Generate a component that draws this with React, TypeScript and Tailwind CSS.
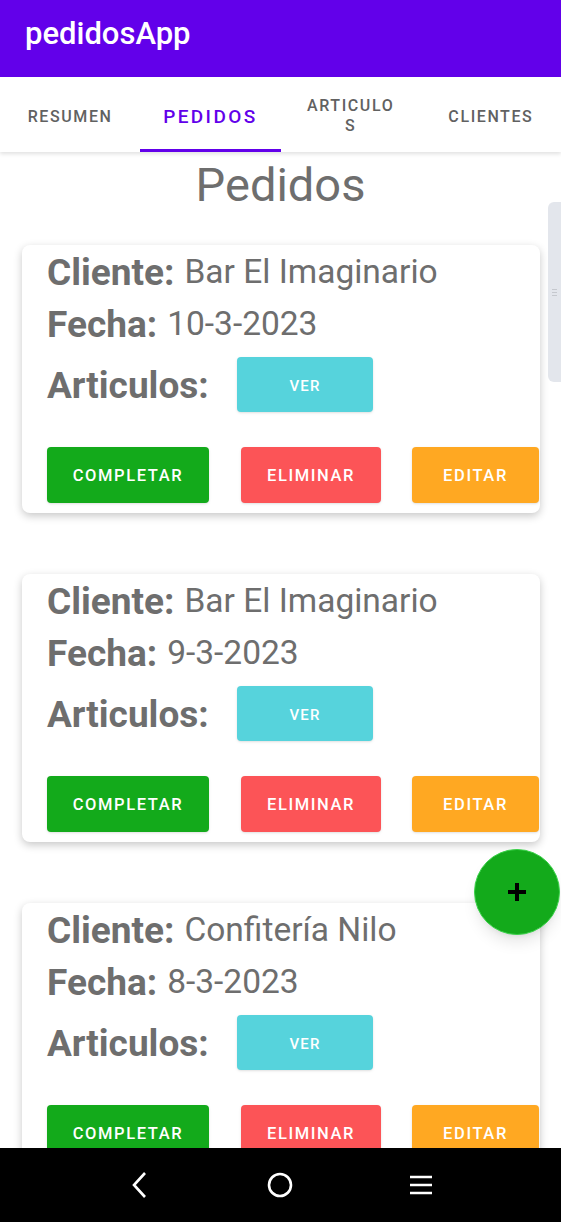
import React from 'react';

interface Pedido {
  cliente: string;
  fecha: string;
}

const pedidos: Pedido[] = [
  { cliente: 'Bar El Imaginario', fecha: '10-3-2023' },
  { cliente: 'Bar El Imaginario', fecha: '9-3-2023' },
  { cliente: 'Confitería Nilo', fecha: '8-3-2023' },
];

function PedidoCard({ pedido }: { pedido: Pedido }) {
  return (
    <div className="ml-[22px] w-[518px] h-[268px] shrink-0 rounded-lg bg-white shadow-[0_3px_8px_rgba(0,0,0,0.22)] pl-[25px] text-[#6e6e6e]">
      <div className="h-[54px] flex items-center leading-none">
        <span className="font-bold text-[37px]">Cliente:</span>
        <span className="ml-[10px] text-[33.5px]">{pedido.cliente}</span>
      </div>
      <div className="h-[50px] flex items-center leading-none">
        <span className="font-bold text-[37px]">Fecha:</span>
        <span className="ml-[10px] text-[33.5px]">{pedido.fecha}</span>
      </div>
      <div className="flex items-center h-[55px] mt-[8px]">
        <span className="text-[37px] font-bold leading-none w-[190px] pt-[2px]">Articulos:</span>
        <button className="w-[136px] h-[55px] pt-[3px] rounded bg-[#56d3dc] text-white text-[15px] font-medium tracking-[1.2px] shadow-sm">
          VER
        </button>
      </div>
      {/* Acciones */}
      <div className="flex mt-[35px] h-[56px]">
        <button className="w-[162px] h-[56px] pt-[3px] rounded bg-[#13aa1b] text-white text-[16.5px] font-medium tracking-[1.6px] shadow-sm">
          COMPLETAR
        </button>
        <button className="ml-[32px] w-[140px] h-[56px] pt-[3px] rounded bg-[#fc5457] text-white text-[16.5px] font-medium tracking-[1.6px] shadow-sm">
          ELIMINAR
        </button>
        <button className="ml-[31px] w-[127px] h-[56px] pt-[3px] rounded bg-[#ffa822] text-white text-[16.5px] font-medium tracking-[1.6px] shadow-sm">
          EDITAR
        </button>
      </div>
    </div>
  );
}

export default function App() {
  return (
    <div className="relative w-[561px] h-[1222px] overflow-hidden flex flex-col bg-white font-['Roboto',sans-serif]">
      {/* Header */}
      <div className="h-[77px] shrink-0 bg-[#6200ea] flex items-center pl-[25px] pb-[8px]">
        <span className="text-white text-[31px] font-medium">pedidosApp</span>
      </div>

      {/* Tabs */}
      <div className="h-[75px] shrink-0 grid grid-cols-4 bg-white shadow-[0_2px_4px_rgba(0,0,0,0.12)] z-10">
        <div className="flex items-center justify-center pt-[5px] text-[16px] font-medium tracking-[1.6px] text-[#616161]">
          RESUMEN
        </div>
        <div className="relative flex items-center justify-center pt-[5px] text-[19px] font-medium tracking-[2.4px] text-[#6200ea]">
          PEDIDOS
          <div className="absolute left-0 right-0 bottom-0 h-[3px] bg-[#6200ea]" />
        </div>
        <div className="flex items-center justify-center text-center pt-[3px] text-[16px] font-medium tracking-[1.6px] leading-[20px] text-[#616161]">
          ARTICULO
          <br />
          S
        </div>
        <div className="flex items-center justify-center pt-[5px] text-[16px] font-medium tracking-[1.6px] text-[#616161]">
          CLIENTES
        </div>
      </div>

      {/* Contenido */}
      <div className="flex-1 overflow-hidden flex flex-col">
        <h1 className="shrink-0 text-center text-[47px] text-[#6e6e6e] leading-none mt-[9px] h-[84px]">Pedidos</h1>
        <div className="shrink-0 flex flex-col gap-[61px]">
          {pedidos.map((p, i) => (
            <PedidoCard key={i} pedido={p} />
          ))}
        </div>
      </div>

      {/* Scroll handle */}
      <div className="absolute right-0 top-[202px] w-[13px] h-[180px] rounded-l-md bg-[#e3e6ec] flex items-center justify-center">
        <div className="w-[5px] flex flex-col gap-[2px]">
          <div className="h-px bg-[#c5c8ce]" />
          <div className="h-px bg-[#c5c8ce]" />
          <div className="h-px bg-[#c5c8ce]" />
        </div>
      </div>

      {/* FAB */}
      <button className="absolute left-[474px] top-[849px] w-[86px] h-[86px] rounded-full bg-[#13aa1b] border border-[#3bd24a] shadow-lg flex items-center justify-center">
        <svg width="22" height="22" viewBox="0 0 22 22">
          <path d="M11 2v18M2 11h18" stroke="#000" strokeWidth="4" />
        </svg>
      </button>

      {/* Navegación del sistema */}
      <div className="h-[74px] shrink-0 bg-black flex items-center justify-around px-[70px]">
        <div className="w-[140px] flex justify-center">
          <svg width="20" height="28" viewBox="0 0 20 28">
            <path d="M15 2L4 14l11 12" fill="none" stroke="#fff" strokeWidth="2.6" />
          </svg>
        </div>
        <div className="w-[140px] flex justify-center">
          <svg width="28" height="28" viewBox="0 0 28 28">
            <circle cx="14" cy="14" r="11" fill="none" stroke="#fff" strokeWidth="2.6" />
          </svg>
        </div>
        <div className="w-[140px] flex justify-center">
          <svg width="24" height="22" viewBox="0 0 24 22">
            <path d="M1 3h22M1 11h22M1 19h22" stroke="#fff" strokeWidth="2.6" />
          </svg>
        </div>
      </div>
    </div>
  );
}
